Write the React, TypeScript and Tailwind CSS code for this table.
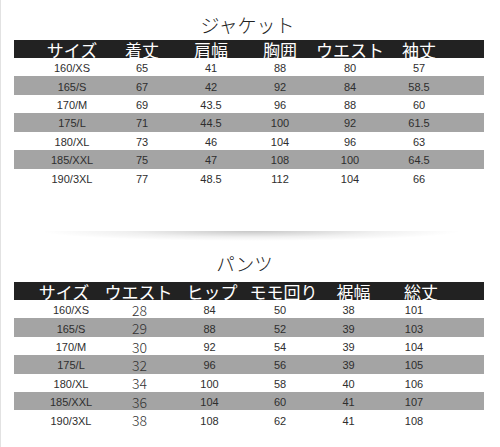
import React from "react";

const W1 = ["w-[70px]", "w-[70px]", "w-[68px]", "w-[70px]", "w-[70px]", "w-[68px]"];
const W2 = ["w-[68px]", "w-[69px]", "w-[71px]", "w-[70px]", "w-[67px]", "w-[64px]"];
const H2 = ["w-[74px]", "w-[75px]", "w-[72px]", "w-[71px]", "w-[69px]", "w-[66px]"];

const jacket = {
  head: ["サイズ", "着丈", "肩幅", "胸囲", "ウエスト", "袖丈"],
  rows: [
    ["160/XS", "65", "41", "88", "80", "57"],
    ["165/S", "67", "42", "92", "84", "58.5"],
    ["170/M", "69", "43.5", "96", "88", "60"],
    ["175/L", "71", "44.5", "100", "92", "61.5"],
    ["180/XL", "73", "46", "104", "96", "63"],
    ["185/XXL", "75", "47", "108", "100", "64.5"],
    ["190/3XL", "77", "48.5", "112", "104", "66"],
  ],
};

const pants = {
  head: ["サイズ", "ウエスト", "ヒップ", "モモ回り", "裾幅", "総丈"],
  rows: [
    ["160/XS", "28", "84", "50", "38", "101"],
    ["165/S", "29", "88", "52", "39", "103"],
    ["170/M", "30", "92", "54", "39", "104"],
    ["175/L", "32", "96", "56", "39", "105"],
    ["180/XL", "34", "100", "58", "40", "106"],
    ["185/XXL", "36", "104", "60", "41", "107"],
    ["190/3XL", "38", "108", "62", "41", "108"],
  ],
};

const cjk = { fontFamily: '"Noto Sans CJK JP", "Noto Sans", sans-serif' };
const lat = { fontFamily: '"Liberation Sans", Arial, sans-serif' };

function Table({
  head,
  rows,
  widths,
  headWidths,
  headPad,
  bigCol,
}: {
  head: string[];
  rows: string[][];
  widths: string[];
  headWidths: string[];
  headPad: string;
  bigCol?: number;
}) {
  return (
    <div className="ml-[13px] w-[470px]">
      <div className={`flex h-[18px] bg-[#222222] pt-[1px] ${headPad}`}>
        {head.map((h, i) => (
          <div key={i} className={`${headWidths[i]} flex shrink-0 justify-center`}>
            <span
              className="whitespace-nowrap text-[17px] leading-[17px] text-white"
              style={cjk}
            >
              {h}
            </span>
          </div>
        ))}
      </div>
      {rows.map((r, ri) => (
        <div
          key={ri}
          className={`flex h-[18.43px] items-center pl-[23px] pt-[3px] ${
            ri % 2 === 1 ? "bg-[#a4a4a4]" : "bg-white"
          }`}
        >
          {r.map((c, ci) => (
            <div key={ci} className={`${widths[ci]} flex shrink-0 justify-center`}>
              {bigCol === ci ? (
                <span
                  className="whitespace-nowrap text-[14px] font-light leading-[12px] text-[#333333] -translate-y-[1px]"
                  style={cjk}
                >
                  {c}
                </span>
              ) : (
                <span
                  className="whitespace-nowrap text-[11px] leading-none text-[#2e2e2e]"
                  style={lat}
                >
                  {c}
                </span>
              )}
            </div>
          ))}
        </div>
      ))}
    </div>
  );
}

export default function App() {
  return (
    <div className="h-[447px] w-[500px] overflow-hidden border-l border-[#e2e2e2] bg-white">
      <div className="h-[40px] pt-[15px] pr-[6px] text-center">
        <span
          className="text-[19px] font-light leading-[18px] tracking-[0px] text-[#222222]"
          style={cjk}
        >
          ジャケット
        </span>
      </div>
      <Table
        head={jacket.head}
        rows={jacket.rows}
        widths={W1}
        headWidths={W1}
        headPad="pl-[23px]"
      />
      <div className="h-[44px]" />
      <div className="mx-auto h-[10px] w-[420px] bg-[radial-gradient(ellipse_50%_100%_at_50%_0%,rgba(0,0,0,0.22),rgba(0,0,0,0.06)_60%,rgba(0,0,0,0)_100%)]" />
      <div className="h-[41px] pt-[12px] pr-[12px] text-center">
        <span
          className="text-[18.5px] font-light leading-[18px] text-[#222222]"
          style={cjk}
        >
          パンツ
        </span>
      </div>
      <Table
        head={pants.head}
        rows={pants.rows}
        widths={W2}
        headWidths={H2}
        headPad="pl-[13px]"
        bigCol={1}
      />
      <div className="pl-[138px] pt-[11px]">
        <span
          className="whitespace-nowrap text-[11px] leading-[11px] text-[#bdbdbd]"
          style={cjk}
        >
          ※平置き採寸のため、多少の誤差がございます。
        </span>
      </div>
    </div>
  );
}
